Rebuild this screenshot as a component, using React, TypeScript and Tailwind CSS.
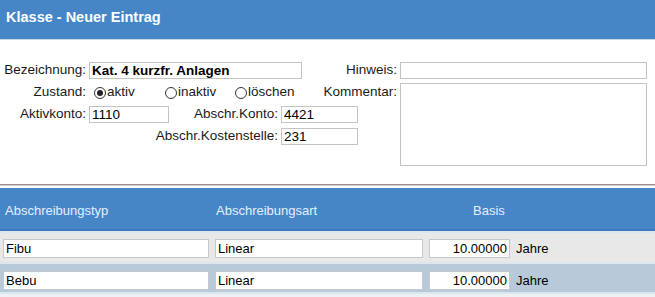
// Klasse - Neuer Eintrag (Anlagenklasse Formular)

const inputCls =
  'h-[17px] border border-[#c4c4c4] bg-white px-[2px] text-[13.5px] text-black leading-none outline-none';

function Radio({ checked, label, className = '' }: { checked?: boolean; label: string; className?: string }) {
  return (
    <span className={`flex shrink-0 items-center ${className}`}>
      <span className="flex h-[12px] w-[12px] items-center justify-center rounded-full border border-[#333] bg-white">
        {checked && <span className="h-[6px] w-[6px] rounded-full bg-[#222]" />}
      </span>
      <span className="ml-[1px]">{label}</span>
    </span>
  );
}

interface Row {
  typ: string;
  art: string;
  basis: string;
}

const rows: Row[] = [
  { typ: 'Fibu', art: 'Linear', basis: '10.00000' },
  { typ: 'Bebu', art: 'Linear', basis: '10.00000' },
];

export default function App() {
  return (
    <div className="h-[297px] w-[655px] overflow-hidden bg-white font-['Liberation_Sans',Arial,sans-serif] text-[#1a1a1a]">
      {/* Kopf */}
      <div className="flex h-[40px] items-center border-b border-[#c9d6e3] bg-[#4686c6] pb-[4px] pl-[6px]">
        <h1 className="text-[14.5px] font-bold text-white">Klasse - Neuer Eintrag</h1>
      </div>

      {/* Formular */}
      <div className="h-[144px] pt-[22px] text-[13.5px]">
        <div className="grid grid-cols-[89px_80px_112px_77px_42px_247px] grid-rows-[17px_17px_17px_17px] gap-y-[5px] whitespace-nowrap">
          {/* Zeile 1 */}
          <label className="col-start-1 row-start-1 flex items-center justify-end pr-[3px]">Bezeichnung:</label>
          <input
            readOnly
            value="Kat. 4 kurzfr. Anlagen"
            className={`${inputCls} col-start-2 col-span-3 row-start-1 w-[213px] font-bold`}
          />
          <label className="col-start-4 col-span-2 row-start-1 flex items-center justify-end pr-[3px]">Hinweis:</label>
          <input readOnly value="" className={`${inputCls} col-start-6 row-start-1 w-[247px]`} />

          {/* Zeile 2 */}
          <label className="col-start-1 row-start-2 flex items-center justify-end pr-[3px]">Zustand:</label>
          <div className="col-start-2 col-span-2 row-start-2 flex items-center pl-[5px]">
            <Radio checked label="aktiv" className="w-[71px]" />
            <Radio label="inaktiv" className="w-[70px]" />
            <Radio label="löschen" />
          </div>
          <label className="col-start-4 col-span-2 row-start-2 flex items-center justify-end pr-[3px]">Kommentar:</label>
          <textarea
            readOnly
            className="col-start-6 row-start-2 row-span-3 -mt-[1px] h-[83px] w-[247px] resize-none self-start border border-[#c4c4c4] bg-white outline-none"
          />

          {/* Zeile 3 */}
          <label className="col-start-1 row-start-3 flex items-center justify-end pr-[3px]">Aktivkonto:</label>
          <input readOnly value="1110" className={`${inputCls} col-start-2 row-start-3 w-[80px]`} />
          <label className="col-start-3 row-start-3 flex items-center justify-end pr-[3px]">Abschr.Konto:</label>
          <input readOnly value="4421" className={`${inputCls} col-start-4 row-start-3 w-[77px]`} />

          {/* Zeile 4 */}
          <label className="col-start-2 col-span-2 row-start-4 flex items-center justify-end pr-[3px]">
            Abschr.Kostenstelle:
          </label>
          <input readOnly value="231" className={`${inputCls} col-start-4 row-start-4 w-[77px]`} />
        </div>
      </div>

      {/* Trenner */}
      <div className="h-[1px] bg-[#9d8e8b]" />
      <div className="h-[1px] bg-[#d3cbc9]" />
      <div className="h-[2px] bg-white" />

      {/* Tabelle */}
      <div className="grid h-[43px] grid-cols-[213px_257px_1fr] items-center border-b-2 border-[#3c79b9] bg-[#4686c6] pt-[5px] text-[13px] text-[#e3effb]">
        <span className="pl-[5px]">Abschreibungstyp</span>
        <span className="pl-[3px]">Abschreibungsart</span>
        <span className="pl-[3px]">Basis</span>
      </div>

      {rows.map((row, i) => (
        <div
          key={row.typ}
          className={`flex items-center border-t-2 border-[#dce6ee] pl-[3px] text-[13px] ${
            i === 0 ? 'bg-[#e8e8e8] pt-[6px] pb-[3px]' : 'bg-[#b8cad9] pt-[7px] pb-[2px]'
          }`}
        >
          <input
            readOnly
            value={row.typ}
            className="h-[19px] w-[206px] border border-[#c6c9cc] bg-white px-[2px] text-[13px] text-black outline-none"
          />
          <input
            readOnly
            value={row.art}
            className="ml-[6px] h-[19px] w-[208px] border border-[#c6c9cc] bg-white px-[2px] text-[13px] text-black outline-none"
          />
          <input
            readOnly
            value={row.basis}
            className="ml-[6px] h-[19px] w-[81px] border border-[#c6c9cc] bg-white px-[2px] text-right text-[13px] text-black outline-none"
          />
          <span className="ml-[6px] text-black">Jahre</span>
        </div>
      ))}
      <div className="h-[10px] border-t-2 border-[#dce6ee] bg-[#eef1f4]" />
    </div>
  );
}
